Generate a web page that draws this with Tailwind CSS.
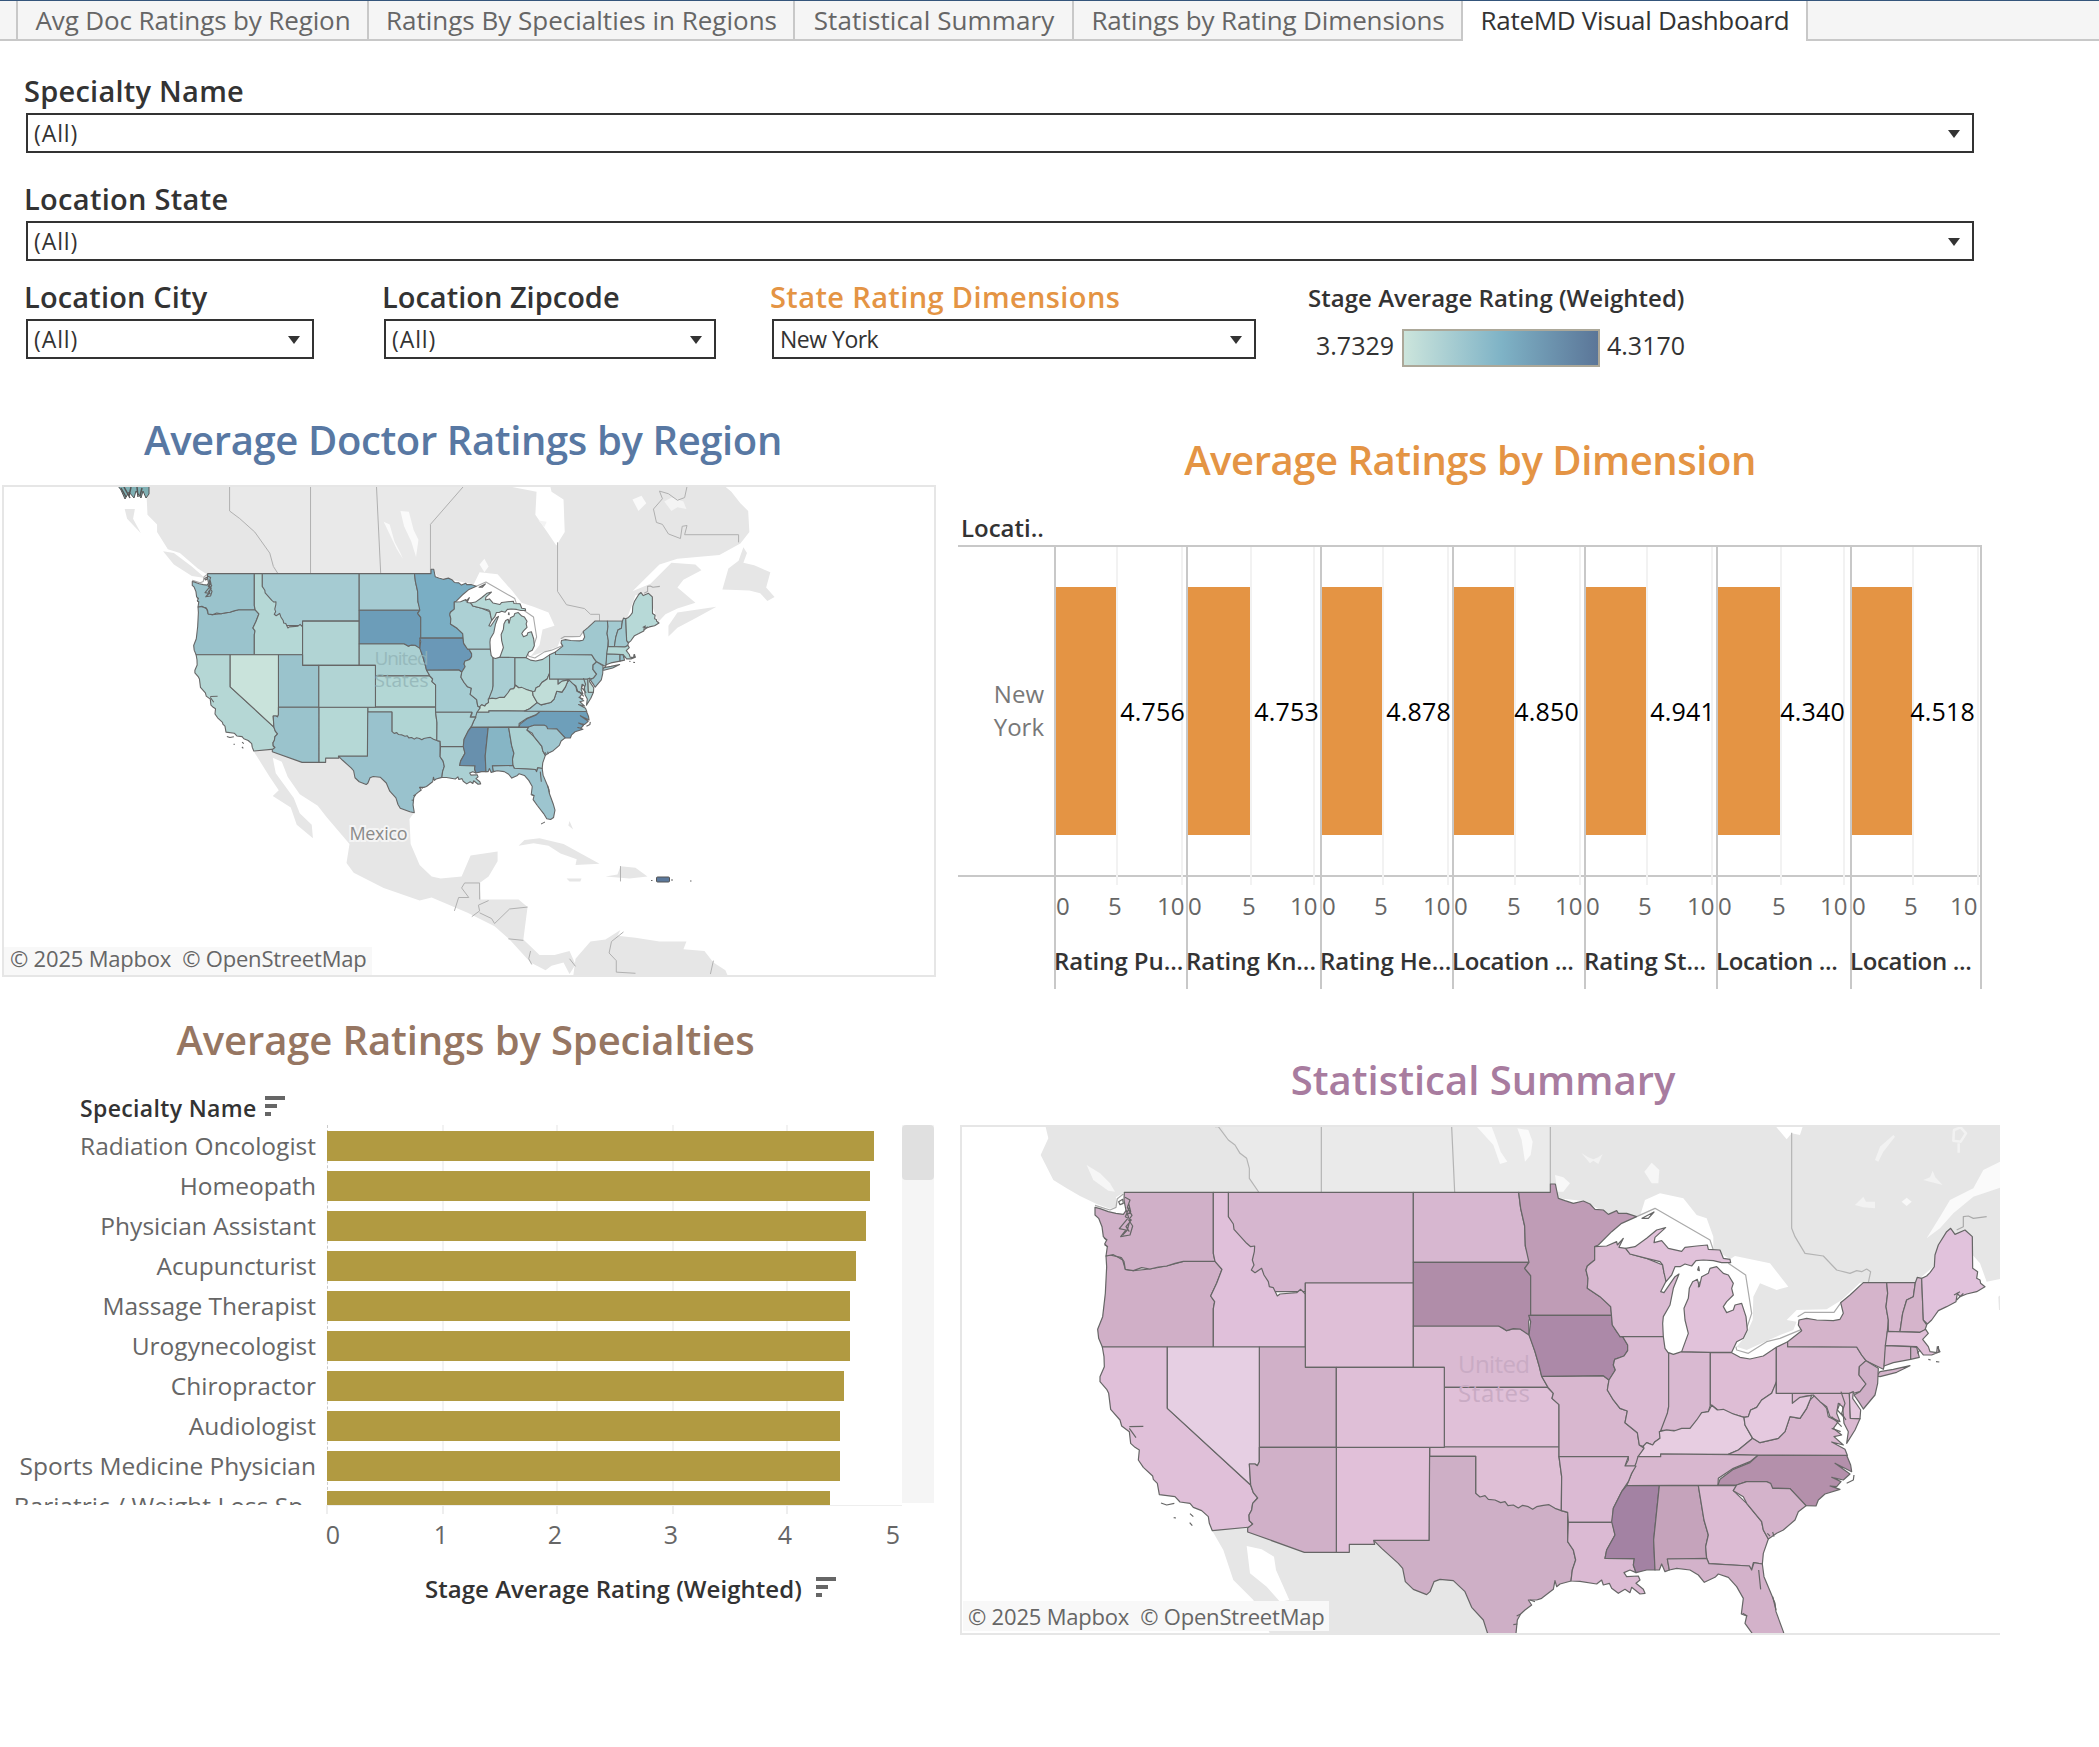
<!DOCTYPE html>
<html lang="en">
<head>
<meta charset="utf-8">
<title>RateMD Visual Dashboard</title>
<script src="https://cdn.jsdelivr.net/npm/@tailwindcss/browser@4"></script>
</head>
<body class="w-[2099px] h-[1747px] overflow-hidden bg-white font-['Open_Sans','Noto_Sans',sans-serif] text-[#333]">

<!-- Worksheet tabs -->
<header class="flex h-[41px] border-t border-[#34557b] bg-[#f5f5f5] text-[26px] leading-[39px] text-[#666] whitespace-nowrap">
  <div class="w-[18px] border-r-2 border-b-2 border-[#c8c8c8]"></div>
  <div class="w-[351px] border-r-2 border-b-2 border-[#c8c8c8] pl-px text-center tracking-[-0.13px]">Avg Doc Ratings by Region</div>
  <div class="w-[426px] border-r-2 border-b-2 border-[#c8c8c8] pl-px text-center">Ratings By Specialties in Regions</div>
  <div class="w-[279px] border-r-2 border-b-2 border-[#c8c8c8] pl-px text-center tracking-[0.1px]">Statistical Summary</div>
  <div class="w-[389px] border-r-2 border-b-2 border-[#c8c8c8] pl-px text-center tracking-[-0.15px]">Ratings by Rating Dimensions</div>
  <div class="w-[345px] border-r-2 border-[#c8c8c8] bg-white pl-px text-center text-[#333] tracking-[-0.3px]">RateMD Visual Dashboard</div>
  <div class="flex-1 border-b-2 border-[#c8c8c8]"></div>
</header>

<!-- Filters -->
<section class="pt-8 pl-[26px] whitespace-nowrap">
  <h3 class="-ml-0.5 h-10 text-[29px] leading-9 font-semibold tracking-[0.25px]">Specialty Name</h3>
  <div class="flex h-10 w-[1948px] items-center justify-between border-2 border-[#333] pr-3 pl-1.5 text-[23px]">
    <span class="mt-px tracking-[0.9px]">(All)</span><svg class="mt-px h-2 w-3" viewBox="0 0 12 8"><path d="M0 0H12L6 8Z" fill="#333"/></svg>
  </div>
  <h3 class="mt-7 -ml-0.5 h-10 text-[29px] leading-9 font-semibold tracking-[0.3px]">Location State</h3>
  <div class="flex h-10 w-[1948px] items-center justify-between border-2 border-[#333] pr-3 pl-1.5 text-[23px]">
    <span class="mt-px tracking-[0.9px]">(All)</span><svg class="mt-px h-2 w-3" viewBox="0 0 12 8"><path d="M0 0H12L6 8Z" fill="#333"/></svg>
  </div>
  <div class="mt-[18px] flex">
    <div class="mr-[70px] w-72">
      <h3 class="-ml-0.5 h-10 text-[29px] leading-9 font-semibold tracking-[0.15px]">Location City</h3>
      <div class="flex h-10 items-center justify-between border-2 border-[#333] pr-3 pl-1.5 text-[23px]">
        <span class="mt-px tracking-[0.9px]">(All)</span><svg class="mt-px h-2 w-3" viewBox="0 0 12 8"><path d="M0 0H12L6 8Z" fill="#333"/></svg>
      </div>
    </div>
    <div class="mr-14 w-[332px]">
      <h3 class="-ml-0.5 h-10 text-[29px] leading-9 font-semibold">Location Zipcode</h3>
      <div class="flex h-10 items-center justify-between border-2 border-[#333] pr-3 pl-1.5 text-[23px]">
        <span class="mt-px tracking-[0.9px]">(All)</span><svg class="mt-px h-2 w-3" viewBox="0 0 12 8"><path d="M0 0H12L6 8Z" fill="#333"/></svg>
      </div>
    </div>
    <div class="mr-[52px] w-[484px]">
      <h3 class="-ml-0.5 h-10 text-[29px] leading-9 font-semibold tracking-[0.38px] text-[#e49444]">State Rating Dimensions</h3>
      <div class="flex h-10 items-center justify-between border-2 border-[#333] pr-3 pl-1.5 text-[23px]">
        <span class="mt-px tracking-[-0.5px]">New York</span><svg class="mt-px h-2 w-3" viewBox="0 0 12 8"><path d="M0 0H12L6 8Z" fill="#333"/></svg>
      </div>
    </div>
    <div>
      <h3 class="h-[50px] text-[24px] leading-[38px] font-semibold tracking-[0.03px]">Stage Average Rating (Weighted)</h3>
      <div class="flex h-[38px] items-center pl-2 text-[25px]">
        <span class="-mt-1 w-[86px]">3.7329</span>
        <div class="mr-[7px] h-[38px] w-[198px] border-2 border-[#aca899] bg-linear-to-r from-[#cce5dc] via-[#7fb3c6] to-[#5b7698]"></div>
        <span class="-mt-1">4.3170</span>
      </div>
    </div>
  </div>
</section>

<main class="flex whitespace-nowrap">
  <div class="w-[958px]">
    <h2 class="mt-[45px] h-14 w-[926px] text-center text-[40px] leading-[56px] font-semibold tracking-[-0.38px] text-[#5878a3]">Average Doctor Ratings by Region</h2>
    <div class="relative mt-[17px] ml-0.5 h-[492px] w-[934px] border-2 border-[#e6e6e6]">
      <svg id="regionMap" class="block size-full" viewBox="4 487 930 488"></svg>
      <div class="absolute bottom-0 left-0 h-7 w-[368px] bg-[#f8f8f8] pl-[6px] text-[22px] leading-[23px] tracking-[-0.2px] text-[#666]">© 2025 Mapbox&nbsp; © OpenStreetMap</div>
    </div>

    <h2 class="mt-[35px] h-14 w-[931px] text-center text-[40px] leading-[56px] font-semibold tracking-[-0.12px] text-[#967662]">Average Ratings by Specialties</h2>
    <div class="mt-[24px] flex h-[33px] pl-20 text-[23px] leading-8 font-semibold tracking-[0.35px]">
      Specialty Name
      <svg class="mt-1 ml-2 h-5 w-5" viewBox="0 0 20 20" fill="#666"><path d="M0 0H20V4H0ZM0 8H12V12H0ZM0 16H6V20H0Z"/></svg>
    </div>
    <div class="flex h-[380px]">
      <div id="specialties" class="relative w-[902px] overflow-hidden pt-px"></div>
      <div class="h-[378px] w-8 bg-[#f5f5f5]"><div class="h-[55px] rounded-sm bg-[#e0e0e0]"></div></div>
    </div>
    <div id="ratingAxis" class="relative h-[60px] text-[25px] leading-8 text-[#666]"></div>
    <div class="mt-[8px] flex pl-[425px] text-[24px] leading-8 font-semibold tracking-[0.04px]">
      Stage Average Rating (Weighted)
      <svg class="mt-1 ml-3.5 h-5 w-5" viewBox="0 0 20 20" fill="#666"><path d="M0 0H20V4H0ZM0 8H12V12H0ZM0 16H6V20H0Z"/></svg>
    </div>
  </div>

  <div class="w-[1042px]">
    <h2 class="mt-[65px] h-14 w-[1024px] text-center text-[40px] leading-[56px] font-semibold tracking-[-0.45px] text-[#e49444]">Average Ratings by Dimension</h2>
    <div class="mt-6 h-[33px] pl-[3px] text-[24px] leading-8 font-semibold">Locati..</div>
    <div class="relative w-[1024px]">
      <div class="absolute top-0 left-0 h-0.5 w-full bg-[#c8c8c8]"></div>
      <div class="absolute top-[330px] left-0 h-0.5 w-full bg-[#c8c8c8]"></div>
      <div id="dimensions" class="grid h-[444px] grid-cols-[96px_132px_134px_132px_132px_132px_134px_132px]">
        <div class="pt-[132px] pr-2.5 text-right text-[24px] leading-[33px] text-[#787878]">New<br>York</div>
      </div>
    </div>
    <h2 class="mt-[63px] h-14 w-[1050px] text-center text-[40px] leading-[56px] font-semibold text-[#a87c9f]">Statistical Summary</h2>
    <div class="relative mt-[17px] ml-0.5 h-[510px] w-[1040px] border-2 border-r-0 border-[#e6e6e6]">
      <svg id="summaryMap" class="block size-full" viewBox="962 1127 1038 506"></svg>
      <div class="absolute bottom-0.5 left-px h-[30px] w-[366px] bg-[#f8f8f8] pl-[5px] text-[22px] leading-[30px] tracking-[-0.2px] text-[#666]">© 2025 Mapbox&nbsp; © OpenStreetMap</div>
    </div>
  </div>
</main>

<script>
// State outlines: [name, region map colour, summary map colour, points]
const states = [
['OR','#9ac3cc','#d0afc7','78,408 90,405 112,410 128,420 136,448 160,452 210,447 260,438 310,424 405,424 426,448 410,490 392,528 404,545 400,566 400,681 67,681 56,655 53,628 68,590 76,520 80,440'],
['WA','#9ac3cc','#d0b0c8','45,262 60,266 85,275 108,280 130,283 138,272 132,240 133,217 400,217 400,400 405,424 310,424 285,430 260,438 235,441 210,447 185,443 160,452 136,448 132,425 124,413 112,410 100,404 78,408 82,380 74,372 80,360 70,350 66,320 56,295 45,285'],
['MT','#a5cbd2','#d6b6cf','445,217 1000,217 1000,489 676,489 676,515 445,515'],
['ID','#b5d8d6','#e0c0da','400,217 445,217 445,290 460,312 462,328 500,370 512,380 524,378 523,395 517,420 522,435 514,450 525,458 545,445 552,465 565,485 568,500 580,503 592,528 600,522 650,518 662,508 676,522 676,681 400,681 400,566 404,545 392,528 410,490 426,448 405,424 400,400'],
['WY','#b1d4d4','#dfbfd7','676,489 1000,489 1000,742 676,742'],
['ND','#a5cbd2','#d7b7d0','1000,217 1316,217 1322,265 1334,318 1336,378 1347,410 1347,427 1000,427'],
['NE','#abd0d2','#dabad2','1000,618 1256,618 1280,632 1300,626 1320,627 1347,640 1365,695 1378,740 1385,768 1404,802 1093,802 1093,742 1000,742'],
['SD','#6c9db9','#b08da9','1000,427 1347,427 1334,445 1352,467 1352,585 1346,605 1347,645 1320,627 1300,626 1280,632 1268,624 1256,618 1000,618'],
['KS','#b3d7d5','#e0c0d8','1093,802 1402,802 1420,820 1416,835 1437,854 1437,981 1093,981'],
['OK','#b0d5d4','#dfbfd6','1049,981 1437,981 1437,1010 1445,1070 1444,1172 1187,1172 1187,1009 1049,1009'],
['TX','#99c2cd','#ceafc6','1047,1009 1187,1009 1187,1120 1200,1131 1215,1127 1225,1138 1245,1140 1262,1148 1275,1145 1284,1157 1300,1155 1315,1164 1328,1156 1345,1160 1358,1168 1370,1160 1390,1156 1407,1154 1425,1165 1444,1172 1463,1177 1463,1265 1480,1290 1487,1320 1477,1350 1473,1383 1440,1392 1430,1400 1425,1382 1420,1408 1385,1435 1370,1440 1345,1440 1355,1455 1335,1470 1322,1482 1312,1500 1308,1540 1315,1585 1290,1580 1235,1560 1222,1538 1210,1500 1175,1462 1155,1415 1120,1382 1080,1378 1062,1385 1050,1415 1040,1424 1000,1408 976,1385 968,1345 955,1330 905,1285 881,1261 1047,1261'],
['NM','#b5d8d6','#e1c0d9','769,982 1049,982 1047,1261 881,1261 884,1273 808,1273 808,1297 769,1297'],
['UT','#9ac3cc','#d0b0c8','538,681 676,681 676,742 769,742 769,982 538,982'],
['CO','#b1d4d4','#dfbfd7','769,742 1093,742 1093,982 769,982'],
['CA','#b5d7d5','#e0c0d9','67,681 262,681 262,865 512,1095 520,1118 533,1134 518,1150 515,1170 507,1185 508,1202 518,1212 512,1221 397,1232 388,1210 385,1190 365,1172 340,1162 330,1150 300,1146 285,1130 238,1124 232,1090 220,1078 218,1068 190,1042 175,1020 178,990 165,982 152,970 148,935 125,918 120,900 92,868 86,820 80,808 60,785 60,770 73,740 72,710'],
['NV','#c9e3db','#e6cfe3','262,681 538,681 538,1025 532,1037 525,1032 508,1032 512,1095 262,865'],
['AZ','#9ac3cc','#d0b0c8','538,982 769,982 769,1297 673,1297 503,1236 503,1224 518,1212 508,1202 507,1185 515,1170 518,1150 533,1134 520,1118 512,1095 508,1032 525,1032 532,1037 538,1025'],
['MN','#7aaec4','#bf9cb6','1316,217 1411,217 1411,192 1426,192 1435,235 1455,242 1480,250 1510,243 1530,252 1545,268 1570,270 1585,283 1610,272 1615,280 1640,280 1670,290 1625,310 1595,335 1555,375 1544,380 1544,420 1522,438 1518,450 1524,475 1522,505 1560,530 1592,560 1595,586 1352,586 1352,467 1334,445 1347,427 1336,378 1334,318 1322,265'],
['MO','#a5ccd2','#d8b7cf','1385,769 1570,767 1587,780 1582,810 1600,840 1620,865 1642,873 1635,908 1672,938 1678,975 1692,985 1680,1010 1668,1038 1635,1038 1645,1020 1645,1010 1437,1010 1437,854 1416,835 1420,820 1404,802'],
['IA','#6a98b7','#ac89a8','1346,586 1595,586 1597,615 1610,635 1628,650 1643,675 1643,692 1632,708 1604,718 1600,735 1606,750 1587,780 1570,767 1385,769 1378,740 1365,695 1347,645 1352,605'],
['WI','#acd0d4','#dbbbd3','1544,380 1580,378 1610,365 1612,375 1630,355 1617,382 1637,385 1650,402 1700,415 1748,435 1752,458 1760,480 1742,515 1752,518 1785,470 1797,462 1780,505 1770,555 1750,590 1748,610 1750,650 1620,650 1597,615 1592,560 1560,530 1522,505 1524,475 1518,450 1522,438 1544,420'],
['IL','#acd0d3','#dbbbd3','1620,650 1750,650 1755,685 1766,700 1766,860 1760,900 1742,935 1740,955 1725,965 1718,975 1700,968 1690,980 1678,975 1672,938 1635,908 1642,873 1620,865 1600,840 1582,810 1587,780 1606,750 1600,735 1604,718 1632,708 1643,692 1643,675 1628,650'],
['IN','#a9ced3','#d9b9d1','1766,698 1780,703 1805,695 1891,697 1891,856 1885,875 1865,880 1855,900 1830,925 1790,932 1760,930 1742,932 1762,880 1766,860'],
['OH','#aed3d3','#debdd5','1891,698 1955,698 1980,712 2010,717 2050,708 2089,682 2089,790 2075,820 2045,840 2030,862 2012,870 2005,890 1992,892 1960,882 1920,875 1895,855 1891,855'],
['MI','#b6d8d6','#e1c2da','1805,695 1825,640 1815,600 1812,565 1825,535 1828,505 1838,485 1852,478 1858,500 1865,470 1885,460 1890,445 1910,440 1930,460 1945,465 1960,490 1955,505 1960,525 1940,545 1930,560 1940,578 1960,570 1965,555 1985,550 1998,590 2002,630 1990,655 1970,665 1955,697 1891,697'],
['MI','#b6d8d6','#e1c2da','1637,385 1665,380 1700,355 1730,330 1757,323 1725,352 1722,368 1745,362 1765,385 1805,394 1815,382 1850,378 1882,375 1885,388 1920,390 1930,415 1950,418 1952,428 1925,428 1900,422 1870,420 1848,422 1835,438 1815,432 1800,440 1785,440 1775,465 1758,485 1752,458 1748,435 1740,425 1700,415 1650,402'],
['KY','#c6e1d9','#e7cde1','1674,1010 1692,985 1690,978 1700,968 1718,975 1725,965 1740,955 1738,935 1760,930 1782,933 1805,925 1830,925 1850,900 1865,878 1885,875 1895,856 1912,870 1930,868 1960,882 1992,892 1995,915 2018,955 1990,978 1975,990 1945,1003 1742,1002 1742,1010'],
['TN','#a5cbd1','#d8b7cf','1674,1010 1742,1010 1742,1002 2035,1005 2010,1025 1960,1045 1915,1075 1914,1095 1640,1097 1655,1060 1668,1030'],
['AR','#abd0d3','#dbbad3','1437,1010 1645,1010 1635,1038 1668,1038 1655,1060 1645,1085 1625,1115 1600,1165 1597,1207 1465,1207 1463,1177 1444,1172 1445,1070'],
['LA','#abd0d3','#dbbad3','1465,1207 1597,1207 1605,1245 1580,1290 1575,1315 1663,1316 1660,1335 1668,1358 1650,1350 1632,1358 1640,1370 1675,1368 1680,1380 1668,1390 1690,1408 1695,1420 1680,1422 1655,1402 1650,1418 1635,1408 1615,1420 1595,1405 1588,1390 1570,1395 1565,1380 1550,1392 1500,1384 1473,1383 1477,1350 1487,1320 1480,1290 1463,1265'],
['MS','#6890ad','#a382a3','1640,1097 1738,1097 1721,1260 1725,1350 1700,1350 1668,1358 1660,1335 1663,1316 1575,1315 1580,1290 1605,1245 1595,1205 1600,1165 1625,1115'],
['AL','#86b5c5','#c5a3bb','1738,1097 1855,1097 1872,1200 1885,1245 1877,1280 1880,1315 1762,1317 1768,1350 1755,1355 1745,1332 1738,1350 1725,1350 1721,1260'],
['GA','#acd2d3','#dcbbd3','1855,1097 1970,1097 1960,1112 2000,1150 2045,1205 2050,1230 2065,1257 2050,1300 2047,1332 2020,1328 2015,1350 2008,1338 1887,1331 1880,1315 1877,1280 1885,1245 1872,1200'],
['FL','#9dc5cf','#d3b2ca','1762,1317 1880,1315 1887,1331 2008,1338 2015,1350 2022,1328 2047,1332 2052,1370 2075,1425 2085,1450 2088,1475 2110,1535 2120,1570 2112,1612 2095,1624 2073,1620 2055,1590 2020,1545 1995,1510 2000,1488 1984,1482 1990,1435 1970,1400 1945,1372 1915,1362 1905,1372 1873,1387 1855,1365 1830,1350 1790,1345 1768,1350'],
['NC','#6e9fba','#b490ab','1914,1095 1920,1078 1960,1048 2010,1028 2035,1005 2300,1006 2312,1035 2315,1055 2265,1030 2310,1062 2290,1080 2255,1072 2283,1085 2270,1100 2250,1098 2280,1108 2235,1122 2215,1140 2208,1158 2178,1157 2130,1106 2078,1105 2060,1085 2000,1085 1970,1095'],
['SC','#9ec6cf','#d4b3cb','1970,1095 2000,1085 2060,1085 2072,1090 2078,1105 2130,1106 2178,1157 2155,1175 2145,1200 2110,1230 2090,1240 2065,1257 2050,1230 2045,1205 2000,1150 1990,1130 1960,1112'],
['VA','#a5cbd2','#d8b6cf','1945,1003 1975,990 2018,955 2040,968 2095,955 2115,935 2130,890 2160,895 2180,865 2190,840 2205,825 2225,848 2240,865 2245,890 2275,905 2260,925 2285,945 2262,950 2290,975 2255,966 2295,988 2302,1006 2035,1005'],
['MD','#abd0d3','#dab9d1','2137,820 2308,820 2311,895 2340,896 2325,930 2300,970 2305,935 2292,910 2288,860 2275,850 2270,880 2280,905 2250,890 2240,860 2220,845 2200,825 2170,830 2137,852'],
['WV','#c0ddd8','#e5c9df','1992,892 2005,890 2012,870 2030,862 2045,840 2075,820 2089,785 2089,820 2137,820 2137,850 2160,832 2195,826 2190,840 2180,865 2160,895 2130,890 2115,935 2095,955 2040,968 2018,955 1995,915'],
['PA','#a9ced3','#d9b9d1','2089,820 2089,682 2123,665 2123,680 2330,681 2345,705 2358,722 2338,740 2337,765 2358,792 2340,815 2320,820'],
['NY','#a0c8cf','#d5b4cb','2123,665 2165,632 2155,615 2157,600 2180,595 2210,600 2260,602 2280,598 2290,580 2282,548 2310,525 2350,488 2420,488 2423,520 2418,560 2425,600 2413,735 2410,748 2358,722 2345,705 2330,681 2123,680'],
['NY','#a0c8cf','#d5b4cb','2390,768 2400,755 2440,748 2490,737 2450,757 2400,770'],
['VT','#a3cad1','#d8b7cf','2420,488 2506,488 2500,530 2480,540 2468,580 2460,634 2425,635 2425,600 2418,560 2423,520'],
['NH','#a0c8cf','#d5b4cb','2506,488 2512,472 2525,475 2530,600 2540,615 2535,630 2520,637 2460,634 2468,580 2480,540 2500,530'],
['ME','#b7d9d7','#e1c2dc','2525,475 2540,468 2550,458 2563,440 2565,405 2575,375 2600,335 2612,325 2625,343 2655,330 2677,350 2678,445 2693,455 2690,475 2700,480 2702,490 2715,500 2690,515 2660,522 2640,530 2632,520 2628,545 2600,560 2575,572 2555,600 2542,612 2530,600'],
['MA','#b3d7d5','#e0c0d8','2422,634 2520,637 2537,628 2545,640 2528,658 2545,680 2550,695 2570,698 2572,680 2580,695 2555,705 2530,705 2510,680 2416,677'],
['CT','#a5cbd1','#d8b7cf','2416,677 2492,680 2492,718 2440,728 2412,738'],
['RI','#98c2cc','#cfafc7','2492,680 2510,682 2518,712 2492,718'],
['NJ','#9bc4cd','#cfafc7','2358,722 2395,745 2393,790 2385,825 2350,867 2338,848 2322,825 2340,815 2358,792 2337,765 2338,740'],
['DE','#c0ddd8','#e5c9df','2308,820 2320,815 2318,835 2342,870 2340,896 2311,895'],
];

// Coastal details, islands and inlets shared by both maps
const coast = 'M116,245 128,238 130,250 120,254ZM135,232 150,240 142,262 156,286 146,300 158,318 150,345 122,350 138,330 118,326 146,292 138,270M146,250 152,275 140,285M148,262 136,290 154,300 138,320 148,335M150,300 142,330 128,345M148,920 190,919M148,925 168,953M243,1149 260,1155 283,1150M281,1193 288,1194M330,1181 340,1190M329,1208 337,1217M1686,295 1722,276 1705,295ZM1856,440 1858,452 1853,450ZM1858,485 1855,502M2575,678 2577,697M2545,718 2552,720M2568,725 2578,726M2512,700 2520,690M2322,1065 2320,1080 2300,1090M2283,815 2295,850 2285,880 2298,900M2280,850 2272,870 2290,890M2255,890 2285,920M2255,925 2282,935M2078,1430 2088,1470M2036,1350 2042,1408M1988,1480 2002,1488M2622,525 2640,515M2630,540 2650,520M72,355 82,360M74,375 84,380M2078,1236 2082,1250M2062,1240 2070,1248M1350,1440 1365,1445M1312,1512 1300,1514M1322,1482 1310,1488';
const waterLines = 'M1670,290 1725,265 1890,360 1900,390M1945,430 1997,465 2015,580 2000,625M1968,680 1970,690 2005,700 2060,665 2100,655 2165,628M2153,590 2175,577 2262,577 2285,545M2630,330 2650,320 2650,290 2665,288 2680,295 2720,290M130,222 112,236 108,262 90,270 45,256';

const poly = (pts, attrs) => `<polygon points="${pts}" ${attrs}/>`;
const line = (d, w, c) => `<path d="${d}" fill="none" stroke="${c}" stroke-width="${w}" vector-effect="non-scaling-stroke" stroke-linejoin="round"/>`;
const layer = (k, w) =>
  line(waterLines, w, '#aaa') +
  states.map(s => poly(s[3], `fill="${s[k]}" stroke="#666" stroke-width="${w}" vector-effect="non-scaling-stroke" stroke-linejoin="round"`)).join('') +
  line(coast, w, '#666');

// Basemap behind the summary map
const land = '#e6e6e6';
const north = '-108,0 -95,55 -118,105 -80,180 -40,205 0,228 50,252 90,266 112,258 108,232 133,217 1411,217 1411,192 1426,192 1435,235 1510,243 1585,282 1680,288 1695,240 1740,220 1810,235 1850,285 1880,295 1900,350 1900,385 1950,418 1965,408 2070,430 2125,500 2090,510 2040,490 2020,530 2018,600 1995,650 1970,680 2000,690 2100,645 2140,630 2150,605 2120,600 2150,570 2240,568 2285,540 2340,488 2500,492 2560,440 2620,340 2700,430 2720,485 2770,475 2770,0';
const summary = document.getElementById('summaryMap');
summary.innerHTML = `<g transform="translate(1080 1120) scale(.33333)">
  ${poly(north, `fill="${land}"`)}
  ${poly('415,0 445,60 500,115 508,175 536,216 1411,216 1411,0', 'fill="#eaeaea"')}
  ${poly('397,1233 500,1200 1100,1200 1250,1545 572,1545 520,1440 460,1380 430,1290', `fill="${land}"`)}
  ${poly('500,1278 545,1288 582,1310 588,1350 628,1440 600,1445 560,1400 510,1360', 'fill="#fff"')}
  ${poly('2540,355 2580,290 2610,240 2680,205 2710,150 2770,120 2770,200 2680,230 2620,280 2580,325', 'fill="#fafafa"')}
  ${poly('2088,20 2168,20 2160,45 2135,40 2120,58', 'fill="#fff"')}
  ${poly('1190,20 1235,20 1250,60 1262,95 1282,125 1260,132 1240,75', 'fill="#fafafa"')}
  ${poly('1312,25 1345,30 1358,65 1352,105 1335,125 1325,60', 'fill="#fafafa"')}
  ${poly('20,135 60,160 90,190 105,215 85,212 40,180', 'fill="#f6f6f6"')}
  ${poly('1693,155 1715,128 1738,150 1735,190 1715,190', 'fill="#f6f6f6"')}
  ${poly('1425,165 1450,172 1470,190 1450,215 1432,215', 'fill="#f8f8f8"')}
  ${poly('2385,120 2400,80 2440,45 2445,50 2410,95 2395,125', 'fill="#f2f2f2"')}
  ${poly('1505,100 1525,112 1540,118 1555,112 1568,102 1555,132 1540,122 1530,130', 'fill="#f2f2f2"')}
  ${poly('2325,255 2350,230 2358,245 2385,245 2385,265 2350,262', 'fill="#f2f2f2"')}
  ${poly('2530,180 2550,172 2558,152 2566,172 2588,195 2550,185', 'fill="#f2f2f2"')}
  ${line('M2622,30 2642,22 2658,40 2642,65 2620,62ZM2636,70V98', 2.5, '#f2f2f2')}
  ${poly('2465,245 2480,233 2495,245 2480,258', 'fill="#f8f8f8"')}
  ${poly('2755,530 2770,520 2770,570 2757,570', `fill="${land}"`)}
  ${line('M405,20 415,20 445,60 465,75 480,100 500,115 508,145 508,175 536,216M724,20V216M1115,20 1124,216M1411,20V192M2135,38V325L2145,350 2175,400 2230,408 2270,450 2310,460 2330,452 2345,455 2360,447 2372,455 2365,488', 1.2, '#b4b4b4')}
  ${layer(2, 1.2)}
</g>
<g fill="#c9abc4" font-size="24" text-anchor="middle">
  <text x="1494" y="1372.500" textLength="72">United</text><text x="1494" y="1402" textLength="72">States</text>
</g>`;

// Basemap behind the region map
const region = document.getElementById('regionMap');
region.innerHTML = `<g transform="translate(0 400) scale(.5995 .3827)" fill="${land}">
  <path d="M243,200 246,300 262,325 262,345 280,390 300,400 330,440 345,455 718,452 722,440 730,462 790,482 800,450 830,455 855,500 870,530 890,540 915,555 925,590 905,600 900,640 885,670 930,645 935,625 965,620 975,600 1000,577 1045,575 1060,510 1080,505 1098,580 1110,560 1130,545 1160,530 1130,490 1140,470 1170,445 1160,430 1120,425 1085,480 1055,500 1100,430 1130,415 1200,405 1235,375 1250,345 1248,290 1235,270 1220,240 1190,200 918,200 918,226 920,240 940,260 942,345 928,380 915,350 893,300 895,240 850,226 850,200Z"/>
  <path d="M383,226V290L425,345 450,400 463,452H718V325L773,226Z" fill="#e9e9e9"/>
  <path d="M1240,385 1246,400 1240,425 1258,432 1285,450 1278,490 1292,515 1280,525 1268,505 1250,498 1205,495 1215,440 1232,420ZM1115,590 1130,555 1195,540 1160,570 1130,595 1115,618ZM272,395 290,400 320,435 342,465 320,460 290,430ZM208,285 225,285 222,310 235,348 212,310Z"/>
  <path d="M640,318 650,325 658,370 668,400 672,415 662,390ZM668,290 682,292 690,340 698,365 694,410 686,370 674,330ZM1055,260 1070,250 1078,270 1065,290ZM800,430 808,415 815,435 808,450Z" fill="#fafafa"/>
  <path d="M1108,265 1120,255 1140,265 1145,285 1130,280 1120,290ZM898,315 912,318 908,332Z" fill="#f4f4f4"/>
  <path d="M423,918 457,905 600,905 690,1080 683,1095 685,1160 700,1215 720,1245 735,1250 770,1245 785,1190 830,1180 830,1205 815,1245 800,1262 802,1305 865,1305 880,1325 873,1410 900,1450 925,1450 950,1440 960,1475 950,1500 940,1470 920,1478 910,1490 885,1470 850,1410 825,1375 780,1340 720,1300 700,1308 640,1275 590,1235 578,1210 583,1160 545,1090 530,1060 500,1030 480,985 470,945 455,935 460,975 490,1040 500,1080 520,1110 522,1145 495,1110 485,1065 455,1035 465,1020 450,985 430,935Z"/>
  <path d="M955,1520 960,1460 985,1415 1010,1410 1035,1385 1030,1400 1060,1405 1100,1415 1145,1415 1140,1435 1175,1440 1190,1470 1210,1490 1218,1520ZM865,1165 875,1150 900,1145 940,1160 975,1190 1000,1212 960,1215 962,1200 935,1185 915,1165 890,1158ZM1035,1218 1060,1222 1080,1245 1050,1250 1010,1245 1030,1240ZM945,1250 970,1250 968,1258 950,1258ZM950,1100 956,1122 948,1112Z"/>
  ${line('M383,226V290L400,310 425,345 450,400 456,435 463,452M518,226V452M628,226 635,452M773,226 718,325V452M930,372V500L945,535 975,545 985,560 1000,560V577M1146,226 1142,255 1130,262 1115,245 1100,238 1105,258 1090,285 1095,320 1105,325 1115,350 1135,362 1138,330 1146,328 1142,352H1232V372M758,1335 765,1300 782,1300 770,1275 775,1262 800,1262V1305M787,1350 800,1335 798,1320 815,1308M800,1340 820,1355 825,1368 850,1330 880,1325M848,1408 873,1412M885,1440 882,1460 887,1475M950,1460 960,1480M1040,1390 1020,1415 1016,1445 1028,1465 1028,1495 1060,1498M1190,1465 1185,1500M1035,1218V1258', 1, '#b0b0b0')}
</g>
<path d="M118,486H149V494L146,498 143,491 141,498 136,491 134,498 129,492 125,499 121,490Z" fill="#7fb0b4" stroke="#555"/>
<path d="M121,488 126,497M124,487 130,498M131,487 129,496M137,487 138,497M142,488 140,496" stroke="#555" stroke-width="1.500"/>
<g fill="#8a8a8a" font-size="18"><text x="378.500" y="839.500" text-anchor="middle" textLength="58" stroke="#f4f4f4" stroke-width="4" paint-order="stroke">Mexico</text></g>
<g transform="translate(184.4 535.65) scale(.1748)">${layer(1, 1.1)}</g>
<rect x="656.500" y="877" width="13" height="5" rx="1" fill="#5b789b" stroke="#555"/><path d="M651,880.500h1.500M671,880h2M690,881h1.500M541,824l4,-2" stroke="#666"/>
<g fill="#92b4b7" font-size="19" text-anchor="middle" opacity=".8"><text x="401.500" y="665" textLength="54">United</text><text x="401.500" y="687" textLength="54">States</text></g>`;

// Ratings by specialty: [label, bar width in px]
const specialties = [['Radiation Oncologist',547],['Homeopath',543],['Physician Assistant',539],['Acupuncturist',529],['Massage Therapist',523],['Urogynecologist',523],['Chiropractor',517],['Audiologist',513],['Sports Medicine Physician',513],['Bariatric / Weight Loss Sp..',503]];
document.getElementById('specialties').innerHTML =
  '<div class="absolute top-0 left-[327px] h-full border-l border-dashed border-[#ccc]"></div>' +
  [442,556,672,786].map(x => `<div class="absolute top-0 h-full w-0.5 bg-[#f2f2f2]" style="left:${x}px"></div>`).join('') +
  specialties.map(([n, w]) => `<div class="relative flex h-10 items-center"><div class="flex w-[327px] justify-end pr-[11px] text-[24.5px] leading-10 text-[#666]">${n}</div><div class="h-[30px] bg-[#b19a41]" style="width:${w}px"></div></div>`).join('');
document.getElementById('ratingAxis').innerHTML =
  '<div class="absolute top-0 left-[327px] h-px w-[575px] bg-[#eee]"></div>' +
  [326,442,556,672,786].map(x => `<div class="absolute top-0 h-[9px] w-0.5 bg-[#eee]" style="left:${x}px"></div>`).join('') +
  [333,441,555,671,785,893].map((x, i) => `<div class="absolute top-[13px] w-10 -translate-x-1/2 text-center" style="left:${x}px">${i}</div>`).join('');

// Ratings by dimension: [header, value, label right edge, gridline offset, x of the 5 tick, x of the 10 tick]
const dims = [['Rating Pu...','4.756',130,61,52,101],['Rating Kn...','4.753',132,63,54,102],['Rating He...','4.878',130,61,52,101],['Location ...','4.850',126,61,53,101],['Rating St...','4.941',130,61,52,101],['Location ...','4.340',128,63,54,102],['Location ...','4.518',124,61,52,98]];
document.getElementById('dimensions').innerHTML += dims.map(([h, v, r, w, a, b], i) => `
  <div class="relative border-l-2 ${i === 6 ? 'border-r-2' : ''} border-[#c8c8c8]">
    <div class="absolute top-0.5 h-[338px] w-0.5 bg-[#f2f2f2]" style="left:${w - 1}px"></div>
    <div class="absolute top-0.5 left-[125px] h-[338px] w-0.5 bg-[#f2f2f2]"></div>
    <div class="absolute top-[42px] left-0 h-[248px] bg-[#e49444]" style="width:${w - 1}px"></div>
    <div class="absolute top-[150px] left-0 z-10 flex justify-end text-[25px] leading-[32px] tracking-[0.2px] text-black" style="width:${r - 1}px">${v}</div>
    <div class="absolute top-[345px] left-0 text-[24px] leading-8 text-[#666]">0</div>
    <div class="absolute top-[345px] text-[24px] leading-8 text-[#666]" style="left:${a}px">5</div>
    <div class="absolute top-[345px] text-[24px] leading-8 text-[#666]" style="left:${b}px">10</div>
    <div class="absolute top-[400px] -left-0.5 text-[24px] leading-8 font-semibold ${h[0] === 'L' ? 'tracking-[-0.35px]' : 'tracking-[-0.05px]'}">${h}</div>
  </div>`).join('');
</script>
</body>
</html>
